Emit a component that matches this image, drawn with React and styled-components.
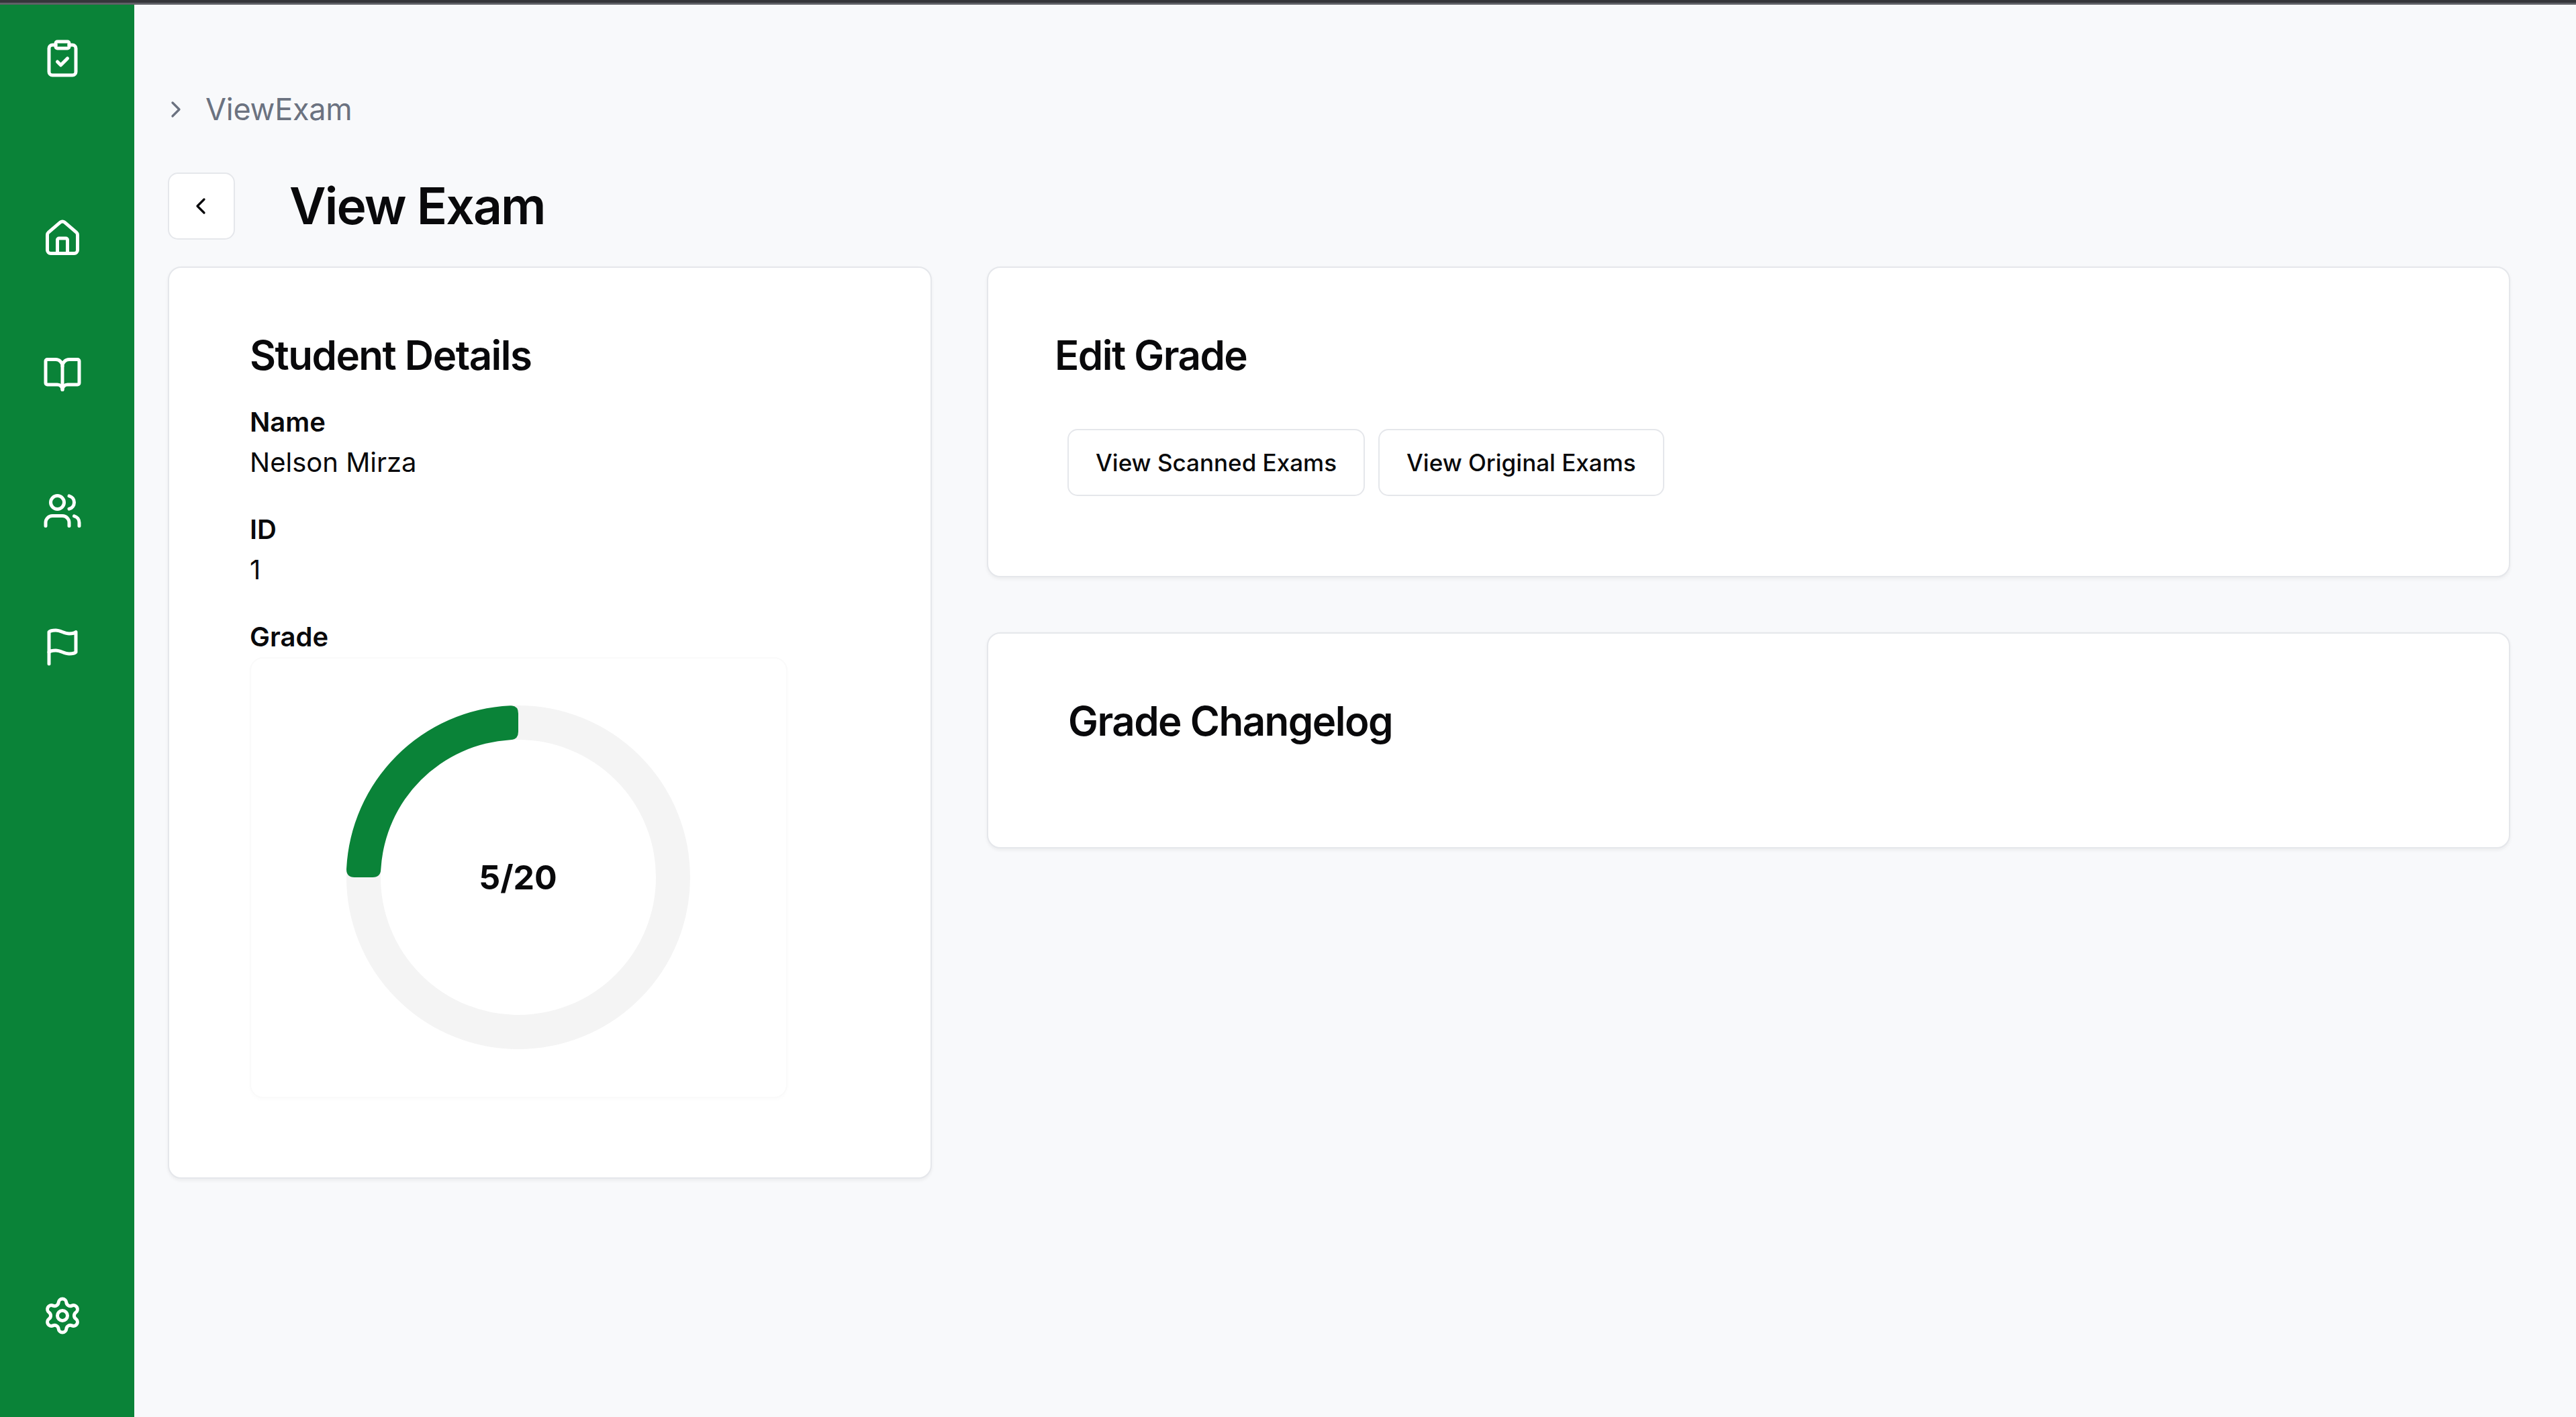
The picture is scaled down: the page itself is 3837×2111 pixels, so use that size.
import styled, { createGlobalStyle } from "styled-components"
import { BookOpen, ChevronLeft, ChevronRight, ClipboardCheck, House, Settings, Users } from "lucide-react"

const GlobalStyle = createGlobalStyle`
    * {
        box-sizing: border-box;
    }
    body {
        margin: 0;
        background: #f8f9fb;
        color: #09090b;
        font-family: Inter, "Liberation Sans", sans-serif;
    }
`

// square cornered flag, the package's one has a rounded pole top
function FlagIcon() {
    return (
        <svg width="60" height="60" viewBox="0 0 24 24" fill="none" stroke="currentColor" strokeWidth="2" strokeLinecap="round" strokeLinejoin="round">
            <path d="M4 15s1-1 4-1 5 2 8 2 4-1 4-1V3s-1 1-4 1-5-2-8-2-4 1-4 1z" />
            <line x1="4" y1="22" x2="4" y2="15" />
        </svg>
    )
}

function GradeRing() {
    return (
        <RingWrap>
            <svg width="512" height="512" viewBox="0 0 512 512">
                <circle cx="256" cy="256" r="230.5" fill="none" stroke="#f4f4f4" strokeWidth="51" />
                <path
                    fill="#0a8338"
                    d="M256 12 L256 39 Q256 51 244 51.3 A205 205 0 0 0 51.3 244 Q51 256 39 256 L12 256 Q0 256 0 244 A256 256 0 0 1 244 0.3 Q256 0 256 12 Z"
                />
            </svg>
            <RingLabel>5/20</RingLabel>
        </RingWrap>
    )
}

export default function App() {
    return (
        <>
            <GlobalStyle />
            <TopBar />
            <Shell>
                <Sidebar>
                    <NavIcon><ClipboardCheck size={60} /></NavIcon>
                    <NavList>
                        <NavIcon><House size={60} /></NavIcon>
                        <NavIcon><BookOpen size={60} /></NavIcon>
                        <NavIcon><Users size={60} /></NavIcon>
                        <NavIcon><FlagIcon /></NavIcon>
                    </NavList>
                    <SettingsIcon><Settings size={60} /></SettingsIcon>
                </Sidebar>
                <Main>
                    <Breadcrumb>
                        <ChevronRight size={40} />
                        <span>ViewExam</span>
                    </Breadcrumb>
                    <HeaderRow>
                        <BackButton><ChevronLeft size={40} /></BackButton>
                        <PageTitle>View Exam</PageTitle>
                    </HeaderRow>
                    <Columns>
                        <StudentCard>
                            <CardTitle>Student Details</CardTitle>
                            <Field>
                                <Label>Name</Label>
                                <Value>Nelson Mirza</Value>
                            </Field>
                            <Field>
                                <Label>ID</Label>
                                <Value>1</Value>
                            </Field>
                            <Label>Grade</Label>
                            <ChartBox>
                                <GradeRing />
                            </ChartBox>
                        </StudentCard>
                        <RightColumn>
                            <EditCard>
                                <CardTitle>Edit Grade</CardTitle>
                                <ButtonRow>
                                    <OutlineButton>View Scanned Exams</OutlineButton>
                                    <OutlineButton>View Original Exams</OutlineButton>
                                </ButtonRow>
                            </EditCard>
                            <ChangelogCard>
                                <CardTitle>Grade Changelog</CardTitle>
                            </ChangelogCard>
                        </RightColumn>
                    </Columns>
                </Main>
            </Shell>
        </>
    )
}

const TopBar = styled.div`
    height: 7px;
    background: #35363a;
    border-bottom: 3px solid #5f6066;
`

const Shell = styled.div`
    display: flex;
    min-height: 2104px;
`

const Sidebar = styled.aside`
    flex: 0 0 200px;
    display: flex;
    flex-direction: column;
    padding: 50px 0 121px 63px;
    background: #0a8338;
    color: #fff;
`

const NavIcon = styled.div`
    width: 60px;
    height: 60px;
`

const NavList = styled.nav`
    display: flex;
    flex-direction: column;
    gap: 143px;
    margin-top: 208px;
`

const SettingsIcon = styled(NavIcon)`
    margin-top: auto;
`

const Main = styled.main`
    flex: 1;
    padding: 118px 98px 0 50px;
`

const Breadcrumb = styled.div`
    display: flex;
    align-items: center;
    gap: 24px;
    height: 76px;
    color: #6b7280;
    font-size: 45px;
    line-height: 76px;
    letter-spacing: -0.25px;

    svg {
        margin-left: -8px;
    }
`

const HeaderRow = styled.div`
    display: flex;
    align-items: center;
    gap: 81px;
    margin-top: 56px;
`

const BackButton = styled.button`
    display: flex;
    align-items: center;
    justify-content: center;
    width: 100px;
    height: 100px;
    padding: 0 3px 0 0;
    background: #fff;
    border: 2.5px solid #e5e7eb;
    border-radius: 15px;
    color: #09090b;
`

const PageTitle = styled.h1`
    margin: 0;
    font-size: 75px;
    font-weight: 600;
    line-height: 100px;
    letter-spacing: -1.9px;
`

const Columns = styled.div`
    display: grid;
    grid-template-columns: 1138px 1fr;
    gap: 82px;
    align-items: start;
    margin-top: 40px;
`

const RightColumn = styled.div`
    display: flex;
    flex-direction: column;
    gap: 82px;
`

const Card = styled.section`
    background: #fff;
    border: 2.5px solid #e5e7eb;
    border-radius: 20px;
    box-shadow: 0 2.5px 5px rgba(0, 0, 0, 0.05);
`

const StudentCard = styled(Card)`
    padding: 100px 120px 118px 120px;
`

const EditCard = styled(Card)`
    padding: 100px 99px 119px 99px;
`

const ChangelogCard = styled(Card)`
    padding: 100px 119px 158px 119px;
`

const CardTitle = styled.h2`
    margin: 0;
    font-size: 60px;
    font-weight: 600;
    line-height: 60px;
    letter-spacing: -1.5px;
`

const Field = styled.div`
    margin-bottom: 40px;

    ${CardTitle} + & {
        margin-top: 40px;
    }
`

const Label = styled.div`
    font-size: 40px;
    font-weight: 600;
    line-height: 60px;
`

const Value = styled.div`
    font-size: 40px;
    line-height: 60px;
`

const ChartBox = styled.div`
    display: flex;
    align-items: center;
    justify-content: center;
    width: 801px;
    height: 657px;
    padding: 0 2px 1px 0;
    border: 2.5px solid #fafafa;
    border-radius: 20px;
    box-shadow: 0 2.5px 5px rgba(0, 0, 0, 0.015);
`

const RingWrap = styled.div`
    position: relative;
    width: 512px;
    height: 512px;
`

const RingLabel = styled.div`
    position: absolute;
    inset: 0;
    display: flex;
    align-items: center;
    justify-content: center;
    font-size: 50px;
    font-weight: 700;
`

const ButtonRow = styled.div`
    display: flex;
    gap: 20px;
    margin: 80px 0 0 19px;
`

const OutlineButton = styled.button`
    height: 100px;
    padding: 0 40px;
    background: #fff;
    border: 2.5px solid #e5e7eb;
    border-radius: 15px;
    color: #09090b;
    font-family: inherit;
    font-size: 35px;
    font-weight: 500;
`
